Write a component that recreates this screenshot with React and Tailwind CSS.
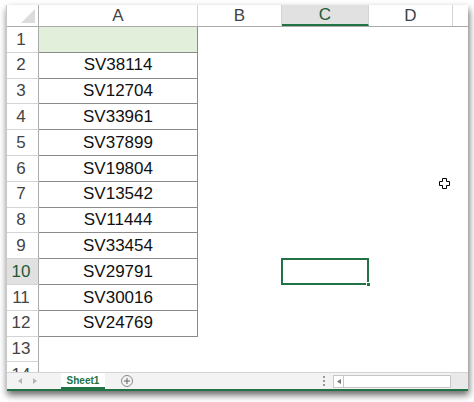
const values = [
  "",
  "SV38114",
  "SV12704",
  "SV33961",
  "SV37899",
  "SV19804",
  "SV13542",
  "SV11444",
  "SV33454",
  "SV29791",
  "SV30016",
  "SV24769",
];

const font = { fontFamily: '"Liberation Sans", Arial, sans-serif' };

function ColHeader({ label, w, active }) {
  return (
    <div
      className={`${w} h-full flex items-center justify-center border-r border-[#d4d4d4] text-[17px] ${
        active ? "bg-[#e1e1e1] border-b-2 border-b-[#217346] text-[#1e5a38]" : "text-[#444]"
      }`}
    >
      {label}
    </div>
  );
}

function Row({ n }) {
  const inTable = n <= 12;
  const value = values[n - 1];
  const active = n === 10;
  return (
    <div className="flex h-[25.8px] shrink-0">
      <div
        className={`w-[32px] shrink-0 flex items-center justify-center pr-[3px] border-r border-r-[#ababab] border-b border-b-[#d4d4d4] text-[17px] ${
          active ? "bg-[#e1e1e1] text-[#1e5a38]" : "text-[#444]"
        }`}
      >
        {n}
      </div>
      <div
        className={`w-[159px] shrink-0 flex items-center justify-center text-[17px] text-[#111] ${
          inTable ? "border-r border-b border-[#8a8a8a]" : ""
        } ${n === 1 ? "bg-[#e2efda]" : ""}`}
      >
        {value}
      </div>
      <div className="w-[84px] shrink-0" />
      <div className="w-[87px] shrink-0 relative">
        {active && (
          <div className="absolute left-[-1px] top-[-1px] right-0 bottom-0 border-2 border-[#217346]">
            <div className="absolute right-[-4px] bottom-[-4px] w-[5px] h-[5px] bg-[#217346] border border-white" />
          </div>
        )}
      </div>
      <div className="flex-1" />
    </div>
  );
}

export default function App() {
  const rows = Array.from({ length: 14 }, (_, i) => i + 1);
  return (
    <div className="w-[474px] h-[402px] bg-white overflow-hidden" style={font}>
      <div className="ml-[6px] mt-[5px] w-[462px] h-[386px] bg-white flex flex-col shadow-[1px_4px_7px_rgba(0,0,0,0.6)] border-l border-[#c8c8c8] relative">
        {/* column headers */}
        <div className="flex h-[22px] shrink-0 border-b border-[#ababab] bg-white">
          <div className="w-[32px] h-full border-r border-[#ababab] relative bg-white">
            <svg className="absolute right-[3px] bottom-[3px]" width="14" height="14" viewBox="0 0 14 14">
              <polygon points="14,0 14,14 0,14" fill="#dcdcdc" />
            </svg>
          </div>
          <ColHeader label="A" w="w-[159px]" />
          <ColHeader label="B" w="w-[84px]" />
          <ColHeader label="C" w="w-[87px]" active />
          <ColHeader label="D" w="w-[84px]" />
          <div className="flex-1" />
        </div>

        {/* grid */}
        <div className="flex flex-col h-[345px] overflow-hidden">
          {rows.map((n) => (
            <Row key={n} n={n} />
          ))}
        </div>

        {/* sheet tabs */}
        <div className="h-[17px] shrink-0 flex items-center bg-[#f3f3f3] border-t border-[#d4d4d4]">
          <div className="w-[52px] flex items-center pl-[11px] gap-[11px]">
            <svg width="4" height="6" viewBox="0 0 4 6">
              <polygon points="4,0 4,6 0,3" fill="#b5b5b5" />
            </svg>
            <svg width="4" height="6" viewBox="0 0 4 6">
              <polygon points="0,0 0,6 4,3" fill="#b5b5b5" />
            </svg>
          </div>
          <div className="ml-[2px] w-[44px] h-full bg-white flex items-center justify-center border-b-2 border-[#217346] text-[10px] font-bold text-[#217346]">
            Sheet1
          </div>
          <div className="ml-[16px] w-[12px] h-[12px] rounded-full border border-[#8a8a8a] flex items-center justify-center">
            <svg width="8" height="8" viewBox="0 0 8 8">
              <path d="M4 1v6M1 4h6" stroke="#666" strokeWidth="1" />
            </svg>
          </div>
          <div className="flex-1" />
          <div className="flex flex-col gap-[2px] mr-[8px]">
            <span className="w-[2px] h-[2px] bg-[#999]" />
            <span className="w-[2px] h-[2px] bg-[#999]" />
            <span className="w-[2px] h-[2px] bg-[#999]" />
          </div>
          <div className="w-[118px] h-[13px] bg-white border border-[#c6c6c6] flex items-center">
            <div className="w-[10px] h-full border-r border-[#c6c6c6] flex items-center justify-center">
              <svg width="4" height="5" viewBox="0 0 4 5">
                <polygon points="4,0 4,5 0,2.5" fill="#777" />
              </svg>
            </div>
          </div>
          <div className="w-[17px] h-full bg-[#e9e9e9]" />
        </div>
        <div className="h-[2px] shrink-0 bg-[#217346]" />

        {/* cursor */}
        <svg className="absolute left-[432px] top-[173px]" width="11" height="11" viewBox="0 0 11 11">
          <path
            d="M3.5 0.5h4v3h3v4h-3v3h-4v-3h-3v-4h3z"
            fill="white"
            stroke="black"
            strokeWidth="1"
          />
        </svg>
      </div>
    </div>
  );
}
